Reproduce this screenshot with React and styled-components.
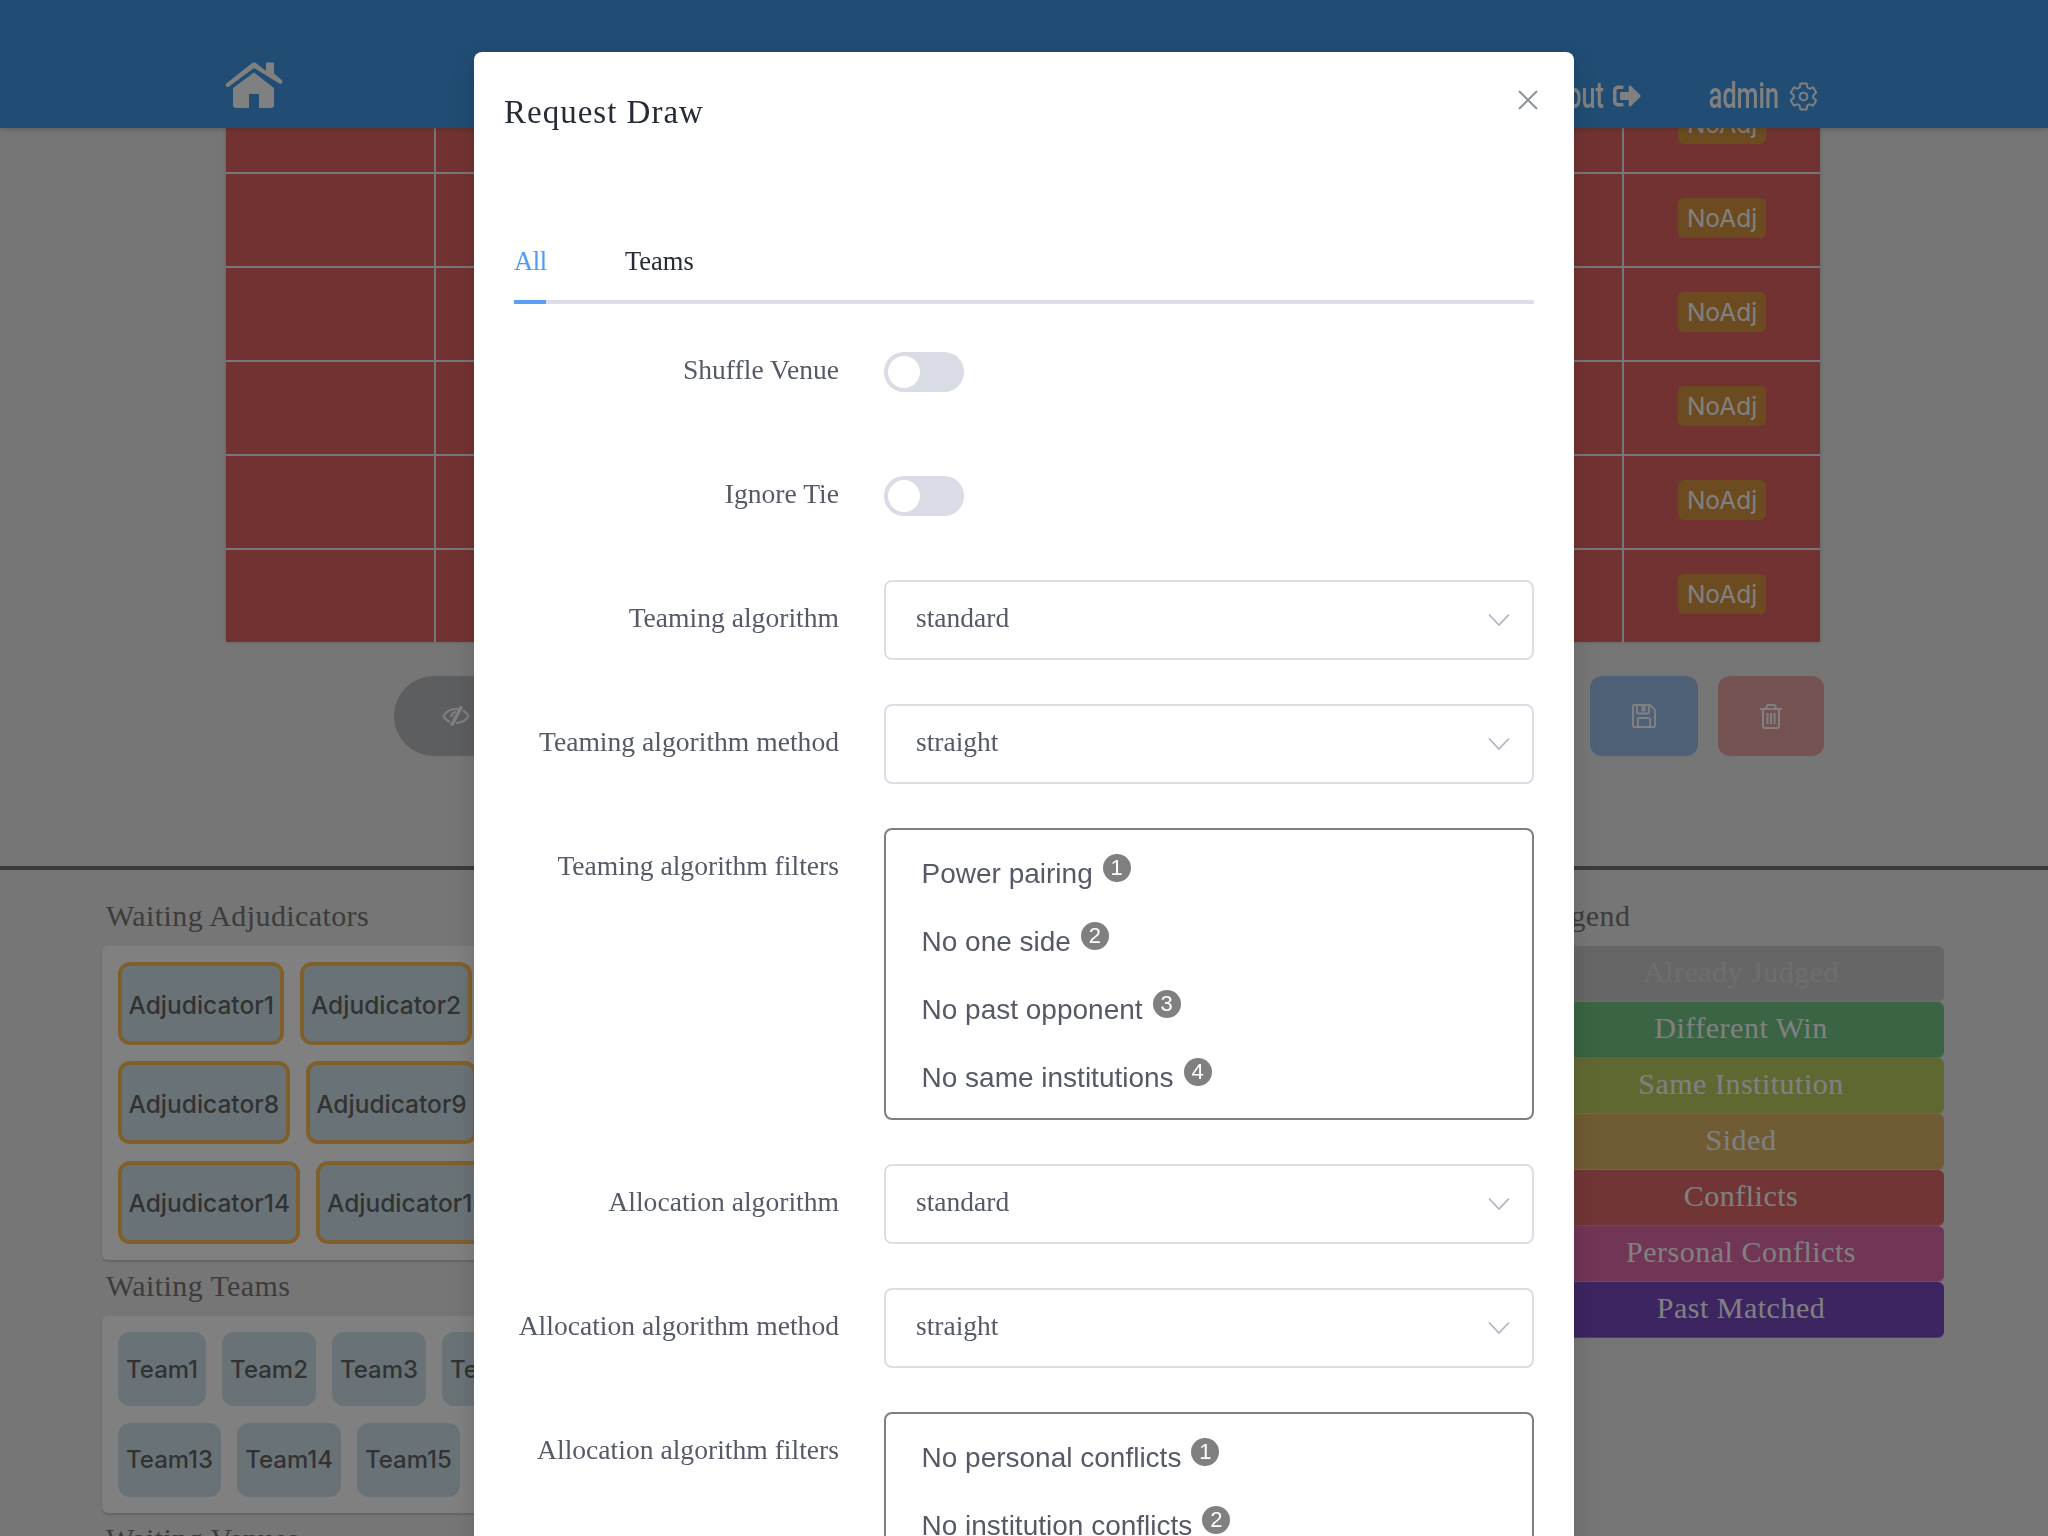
import { Fragment } from "react";
import styled, { createGlobalStyle } from "styled-components";
import { FaSignOutAlt } from "react-icons/fa";
import { IoSettingsOutline } from "react-icons/io5";

const serif = `"Liberation Serif", "Times New Roman", serif`;
const sans = `"Liberation Sans", Arial, sans-serif`;

const GlobalStyle = createGlobalStyle`
  html, body {
    margin: 0;
    height: 100%;
    overflow: hidden;
    background: #e4e4e4;
  }
  #root {
    height: 1536px;
    overflow: hidden;
  }
  * {
    box-sizing: border-box;
  }
`;

const Page = styled.div`
  padding-top: 78px;
  height: 1536px;
  overflow: hidden;
`;

const Header = styled.header`
  position: fixed;
  top: 0;
  left: 0;
  right: 0;
  height: 128px;
  display: flex;
  align-items: flex-start;
  justify-content: space-between;
  padding: 0 229px 0 225px;
  background: #0778dc;
  box-shadow: 0 2px 6px rgba(0, 0, 0, 0.25);
  z-index: 2;
`;

const HomeIcon = styled.svg`
  width: 58px;
  height: 46px;
  margin-top: 62px;
  fill: #fff;
`;

const Nav = styled.nav`
  display: flex;
  align-items: center;
  gap: 68px;
  height: 40px;
  margin-top: 76px;
`;

const NavItem = styled.div`
  display: flex;
  align-items: center;
  gap: 9px;
  color: #fff;
`;

/* no condensed face is installed, so the header text is squeezed from Roboto */
const NavText = styled.span`
  width: ${(p) => p.$width}px;
  display: flex;
  justify-content: flex-end;
  white-space: nowrap;
  font-family: Roboto, sans-serif;
  font-size: 36px;
  font-weight: 500;
  transform: scaleX(0.7);
  transform-origin: right center;
`;

const Table = styled.div`
  width: 1594px;
  margin-left: 226px;
  display: grid;
  grid-template-columns: 208px 1fr 198px;
  grid-auto-rows: 94px;
  box-shadow: 0 0 4px rgba(0, 0, 0, 0.25);
`;

const Cell = styled.div`
  background: #de3434;
  border-left: ${(p) => (p.$first ? "none" : "2px solid #e6e6e6")};
  border-top: 2px solid #e6e6e6;
  display: flex;
  align-items: flex-start;
  justify-content: center;
  padding-top: 24px;
`;

const NoAdj = styled.span`
  width: 88px;
  height: 40px;
  display: flex;
  align-items: center;
  justify-content: center;
  border-radius: 6px;
  background: #c87500;
  color: #fff;
  font-family: Inter, sans-serif;
  font-size: 24.5px;
`;

const Actions = styled.div`
  display: flex;
  gap: 20px;
  margin: 34px 0 0 394px;
  width: 1430px;
`;

const ActionButton = styled.button`
  height: 80px;
  width: ${(p) => p.$width}px;
  margin-right: ${(p) => (p.$pill ? "auto" : "0")};
  border: none;
  border-radius: ${(p) => (p.$pill ? "40px" : "12px")};
  background: ${(p) => p.$color};
  display: flex;
  align-items: center;
  justify-content: center;
  padding: 0;
`;

const ActionIcon = styled.svg`
  width: ${(p) => p.$width}px;
  height: ${(p) => p.$height}px;
  fill: none;
  stroke: #fff;
  stroke-width: 2;
`;

const Divider = styled.div`
  height: 4px;
  margin-top: 110px;
  background: #4b4b4b;
`;

const Bottom = styled.div`
  display: flex;
  justify-content: space-between;
  padding: 20px 104px 0 102px;
`;

const WaitingColumn = styled.div`
  width: 1362px;
`;

const LegendColumn = styled.div`
  width: 406px;
`;

const SectionTitle = styled.h3`
  margin: 0;
  height: 56px;
  padding: 0 0 5px ${(p) => (p.$flush ? "0" : "4px")};
  line-height: 51px;
  font-family: ${serif};
  font-size: 30px;
  font-weight: 400;
  letter-spacing: 0.4px;
  color: #4d4d4d;
`;

const Panel = styled.div`
  display: flex;
  flex-wrap: wrap;
  gap: 16px;
  padding: 16px;
  background: #fff;
  border-radius: 6px;
  box-shadow: 0 2px 2px rgba(0, 0, 0, 0.2);
  height: ${(p) => p.$height}px;
  overflow: hidden;
`;

const AdjChip = styled.div`
  height: 83px;
  padding: 2px 6.5px 0;
  display: flex;
  align-items: center;
  border: 4px solid #fcac25;
  border-radius: 12px;
  background: #c3dee8;
  color: #333;
  font-family: Inter, sans-serif;
  font-size: 24.5px;
  font-weight: 500;
`;

const TeamChip = styled.div`
  height: 74px;
  padding: 0 8px;
  display: flex;
  align-items: center;
  border-radius: 12px;
  background: #c3dee8;
  color: #333;
  font-family: Inter, sans-serif;
  font-size: 24px;
  font-weight: 500;
`;

const LegendItem = styled.div`
  height: 56px;
  display: flex;
  align-items: center;
  justify-content: center;
  padding-bottom: 4px;
  border-radius: 6px;
  border-bottom: 1px solid rgba(255, 255, 255, 0.25);
  background: ${(p) => p.$color};
  color: ${(p) => p.$text || "#fff"};
  font-family: ${serif};
  font-size: 30px;
  letter-spacing: 0.5px;
`;

const Mask = styled.div`
  position: fixed;
  inset: 0;
  background: rgba(50, 50, 50, 0.62);
  z-index: 10;
  overflow: hidden;
`;

const Modal = styled.div`
  position: relative;
  width: 1100px;
  margin: 52px auto 0;
  padding: 0 40px;
  background: #fff;
  border-radius: 8px;
  box-shadow: 0 8px 24px rgba(0, 0, 0, 0.15);
`;

const ModalTitle = styled.div`
  margin-left: -10px;
  height: 126px;
  padding-top: 38px;
  line-height: 44px;
  font-family: ${serif};
  font-size: 33px;
  letter-spacing: 1px;
  color: #262b36;
`;

const CloseButton = styled.svg`
  position: absolute;
  top: 38px;
  right: 36px;
  width: 20px;
  height: 20px;
  stroke: #8f939c;
  stroke-width: 2;
  fill: none;
`;

const Tabs = styled.div`
  display: flex;
  gap: 79px;
  height: 126px;
  padding-top: 64px;
  border-bottom: 4px solid #dcdfe9;
`;

const Tab = styled.div`
  height: 62px;
  width: ${(p) => (p.$active ? "32px" : "auto")};
  line-height: 38px;
  font-family: ${serif};
  font-size: 26.5px;
  letter-spacing: ${(p) => (p.$active ? "-0.4px" : "0")};
  color: ${(p) => (p.$active ? "#4a9bf5" : "#262b36")};
  border-bottom: ${(p) => (p.$active ? "4px solid #5b9ef5" : "none")};
`;

const Form = styled.div`
  display: flex;
  flex-direction: column;
  gap: 44px;
  padding-top: 28px;
`;

const Row = styled.div`
  display: flex;
  min-height: 80px;
`;

const Label = styled.label`
  width: 325px;
  flex-shrink: 0;
  padding-top: 18px;
  line-height: 40px;
  text-align: right;
  font-family: ${serif};
  font-size: 27.6px;
  color: #555a66;
`;

const Control = styled.div`
  margin-left: 45px;
  width: 650px;
  display: flex;
  align-items: ${(p) => (p.$top ? "flex-start" : "center")};
`;

const Switch = styled.div`
  width: 80px;
  height: 40px;
  padding: 4px;
  border-radius: 20px;
  background: #d9dbe5;

  &::before {
    content: "";
    display: block;
    width: 32px;
    height: 32px;
    border-radius: 50%;
    background: #fff;
  }
`;

const Select = styled.div`
  width: 100%;
  height: 80px;
  display: flex;
  align-items: center;
  justify-content: space-between;
  padding: 0 22px 4px 30px;
  border: 2px solid #dcdee5;
  border-radius: 8px;
  font-family: ${serif};
  font-size: 27.5px;
  color: #555a66;
`;

const Chevron = styled.svg`
  width: 22px;
  height: 14px;
  margin-top: 3px;
  fill: none;
  stroke: #aeb3c2;
  stroke-width: 1.6;
`;

const FilterBox = styled.div`
  width: 100%;
  padding: 10px 35.500px 6px;
  border: 2px solid #7c7e84;
  border-radius: 8px;
`;

const FilterItem = styled.div`
  height: 68px;
  display: flex;
  align-items: center;
  font-family: ${sans};
  font-size: 28px;
  color: #555a66;
`;

const FilterBadge = styled.span`
  width: 28px;
  height: 28px;
  margin: -12px 0 0 10px;
  display: flex;
  align-items: center;
  justify-content: center;
  border-radius: 50%;
  background: #808080;
  color: #fff;
  font-size: 22px;
`;

const adjudicators = Array.from({ length: 19 }, (_, i) => `Adjudicator${i + 1}`);
const teams = Array.from({ length: 22 }, (_, i) => `Team${i + 1}`);
const legend = [
  ["Already Judged", "#bbbbbb", "#d0d0d0"],
  ["Different Win", "#48b65f"],
  ["Same Institution", "#acc034"],
  ["Sided", "#d4a037"],
  ["Conflicts", "#d73c3c"],
  ["Personal Conflicts", "#d73c8e"],
  ["Past Matched", "#4e11ac"],
];
const teamingFilters = ["Power pairing", "No one side", "No past opponent", "No same institutions"];
const allocationFilters = ["No personal conflicts", "No institution conflicts"];

const SelectField = ({ label, value }) => (
  <Row>
    <Label>{label}</Label>
    <Control>
      <Select>
        {value}
        <Chevron viewBox="0 0 22 14">
          <polyline points="1,1.5 11,12 21,1.5" />
        </Chevron>
      </Select>
    </Control>
  </Row>
);

const FilterField = ({ label, items }) => (
  <Row>
    <Label>{label}</Label>
    <Control $top>
      <FilterBox>
        {items.map((item, i) => (
          <FilterItem key={item}>
            {item}
            <FilterBadge>{i + 1}</FilterBadge>
          </FilterItem>
        ))}
      </FilterBox>
    </Control>
  </Row>
);

const App = () => {
  return (
    <>
      <GlobalStyle />
      <Page>
        <Header>
          <HomeIcon viewBox="0 0 58 46">
            <path d="M41 1.5a1 1 0 0 1 1-1h6a1 1 0 0 1 1 1v10l7.6 6.600a2 2 0 0 1-2.600 3.100L29 6 3.800 24.700a2 2 0 0 1-2.500-3.100L26.500 1.500a4 4 0 0 1 5 0L41 9z" />
            <path d="M29 10.500 49 26v17a3 3 0 0 1-3 3H34V32H24v14H11a3 3 0 0 1-3-3V26z" />
          </HomeIcon>
          <Nav>
            <NavItem>
              <NavText $width={84}>Logout</NavText>
              <FaSignOutAlt size={28} />
            </NavItem>
            <NavItem>
              <NavText $width={70}>admin</NavText>
              <IoSettingsOutline size={31} />
            </NavItem>
          </Nav>
        </Header>

        <Table>
          {Array.from({ length: 6 }).map((_, i) => (
            <Fragment key={i}>
              <Cell $first />
              <Cell />
              <Cell>
                <NoAdj>NoAdj</NoAdj>
              </Cell>
            </Fragment>
          ))}
        </Table>

        <Actions>
          <ActionButton $pill $width={124} $color="#a2a5ac">
            <ActionIcon $width={28} $height={20} viewBox="0 0 28 20">
              <path d="M8 16C4.500 14.500 2.500 12 1.500 10 4 5.500 8.500 3 14 3c1.200 0 2.300.1 3.400.4" />
              <path d="M21 4.500c2.800 1.300 4.500 3.400 5.500 5.500-2.500 4.500-7 7-12.500 7" />
              <path d="M19.500 0.500 9.500 19.500" strokeWidth="3.500" />
              <path d="M9.500 11c0-3 2-4.800 4.500-5" />
            </ActionIcon>
          </ActionButton>
          <ActionButton $width={108} $color="#7fafe6">
            <ActionIcon $width={24} $height={24} viewBox="0 0 24 24">
              <path d="M2.500 1H18l5 5v15.500a1.500 1.500 0 0 1-1.500 1.500h-19A1.500 1.500 0 0 1 1 21.500v-19A1.500 1.500 0 0 1 2.500 1z" />
              <path d="M5 1v7.500a1 1 0 0 0 1 1h10a1 1 0 0 0 1-1V1" />
              <path d="M11.500 2v5.500" strokeWidth="4" />
              <path d="M6 23v-8a1 1 0 0 1 1-1h10a1 1 0 0 1 1 1v8" />
            </ActionIcon>
          </ActionButton>
          <ActionButton $width={106} $color="#e18987">
            <ActionIcon $width={22} $height={25} viewBox="0 0 22 25">
              <path d="M0 5h22" />
              <path d="M6.500 5V3a2 2 0 0 1 2-2h5a2 2 0 0 1 2 2v2" />
              <path d="M3 5v17a2 2 0 0 0 2 2h12a2 2 0 0 0 2-2V5" />
              <path d="M7.500 9v11M11 9v11M14.500 9v11" />
            </ActionIcon>
          </ActionButton>
        </Actions>

        <Divider />

        <Bottom>
          <WaitingColumn>
            <SectionTitle>Waiting Adjudicators</SectionTitle>
            <Panel $height={314}>
              {adjudicators.map((name) => (
                <AdjChip key={name}>{name}</AdjChip>
              ))}
            </Panel>
            <SectionTitle>Waiting Teams</SectionTitle>
            <Panel $height={197}>
              {teams.map((name) => (
                <TeamChip key={name}>{name}</TeamChip>
              ))}
            </Panel>
            <SectionTitle>Waiting Venues</SectionTitle>
          </WaitingColumn>
          <LegendColumn>
            <SectionTitle $flush>Legend</SectionTitle>
            {legend.map(([name, color, text]) => (
              <LegendItem key={name} $color={color} $text={text}>
                {name}
              </LegendItem>
            ))}
          </LegendColumn>
        </Bottom>
      </Page>

      <Mask>
        <Modal>
          <ModalTitle>Request Draw</ModalTitle>
          <CloseButton viewBox="0 0 20 20">
            <path d="M1 1l18 18M19 1 1 19" />
          </CloseButton>
          <Tabs>
            <Tab $active>All</Tab>
            <Tab>Teams</Tab>
          </Tabs>
          <Form>
            <Row>
              <Label>Shuffle Venue</Label>
              <Control>
                <Switch />
              </Control>
            </Row>
            <Row>
              <Label>Ignore Tie</Label>
              <Control>
                <Switch />
              </Control>
            </Row>
            <SelectField label="Teaming algorithm" value="standard" />
            <SelectField label="Teaming algorithm method" value="straight" />
            <FilterField label="Teaming algorithm filters" items={teamingFilters} />
            <SelectField label="Allocation algorithm" value="standard" />
            <SelectField label="Allocation algorithm method" value="straight" />
            <FilterField label="Allocation algorithm filters" items={allocationFilters} />
          </Form>
        </Modal>
      </Mask>
    </>
  );
};

export default App;
